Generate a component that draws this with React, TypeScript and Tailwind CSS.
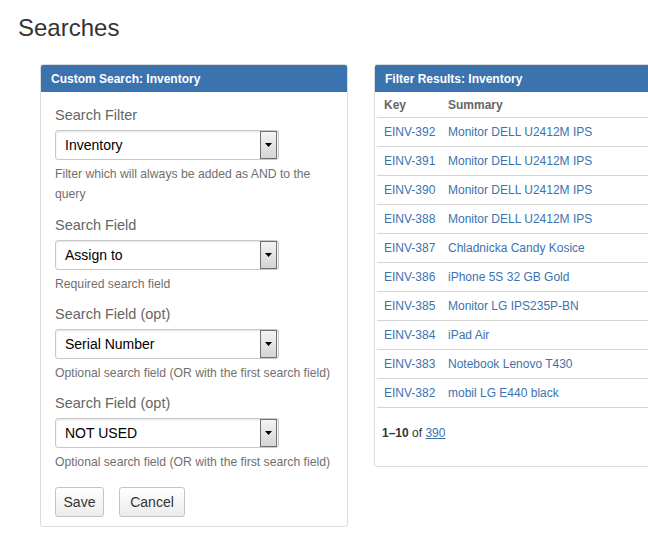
const rows = [
  ["EINV-392", "Monitor DELL U2412M IPS"],
  ["EINV-391", "Monitor DELL U2412M IPS"],
  ["EINV-390", "Monitor DELL U2412M IPS"],
  ["EINV-388", "Monitor DELL U2412M IPS"],
  ["EINV-387", "Chladnicka Candy Kosice"],
  ["EINV-386", "iPhone 5S 32 GB Gold"],
  ["EINV-385", "Monitor LG IPS235P-BN"],
  ["EINV-384", "iPad Air"],
  ["EINV-383", "Notebook Lenovo T430"],
  ["EINV-382", "mobil LG E440 black"],
];

const fields = [
  { label: "Search Filter", value: "Inventory", help: "Filter which will always be added as AND to the query" },
  { label: "Search Field", value: "Assign to", help: "Required search field" },
  { label: "Search Field (opt)", value: "Serial Number", help: "Optional search field (OR with the first search field)" },
  { label: "Search Field (opt)", value: "NOT USED", help: "Optional search field (OR with the first search field)" },
];

function FakeSelect({ value }: { value: string }) {
  return (
    <div className="flex h-[30px] w-[224px] items-center rounded-[3px] border border-[#c8c8c8] bg-white shadow-[inset_0_1px_2px_rgba(0,0,0,0.12)]">
      <span className="flex-1 pl-[9px] text-[14px] text-black">{value}</span>
      <span className="mr-px flex h-[28px] w-[17px] items-center justify-center border border-[#707070] bg-gradient-to-b from-[#f4f4f4] to-[#d4d4d4]">
        <svg width="7" height="4" viewBox="0 0 7 4">
          <path d="M0 0h7L3.5 4z" fill="#000" />
        </svg>
      </span>
    </div>
  );
}

export default function App() {
  return (
    <div className="h-[555px] w-[648px] overflow-hidden bg-white font-['Liberation_Sans',Arial,sans-serif]">
      <h1 className="pl-[18px] pt-[14px] text-[24px] leading-[28px] text-[#333]">Searches</h1>
      <div className="mt-[22px] flex items-start gap-[26px] pl-[40px]">
        <div className="w-[308px] shrink-0 rounded-[3px] border border-[#dcdcdc]">
          <div className="flex h-[27px] items-center rounded-t-[2px] bg-[#3b73af] pl-[10px] text-[12px] font-bold text-white">
            Custom Search: Inventory
          </div>
          <div className="px-[14px] pb-[9px] pt-[13px]">
            {fields.map((f, i) => (
              <div key={i} className={i === 0 ? "mb-[11px]" : "mb-[10px]"}>
                <div className="mb-[5px] text-[14.5px] leading-[20px] text-[#666]">{f.label}</div>
                <FakeSelect value={f.value} />
                <div className="mt-[4px] text-[12.2px] leading-[20px] text-[#707070]">{f.help}</div>
              </div>
            ))}
            <div className="mt-[15px] flex gap-[15px]">
              <button className="h-[30px] w-[49px] rounded-[3px] border border-[#c4c4c4] bg-gradient-to-b from-white to-[#ececec] text-[14px] text-[#333]">
                Save
              </button>
              <button className="h-[30px] w-[66px] rounded-[3px] border border-[#c4c4c4] bg-gradient-to-b from-white to-[#ececec] text-[14px] text-[#333]">
                Cancel
              </button>
            </div>
          </div>
        </div>
        <div className="h-[403px] w-[300px] shrink-0 rounded-[3px] border border-[#dcdcdc]">
          <div className="flex h-[27px] items-center rounded-t-[2px] bg-[#3b73af] pl-[10px] text-[12px] font-bold text-white">
            Filter Results: Inventory
          </div>
          <div className="pl-[2px]">
            <div className="flex h-[26px] items-center border-b border-[#d5d5d5] text-[12px] font-bold text-[#666]">
              <span className="w-[71px] pl-[7px]">Key</span>
              <span>Summary</span>
            </div>
            {rows.map(([k, s]) => (
              <div key={k} className="flex h-[29px] items-center border-b border-[#d5d5d5] text-[12px] text-[#3b73af]">
                <span className="w-[71px] pl-[7px]">{k}</span>
                <span>{s}</span>
              </div>
            ))}
            <div className="pl-[5px] pt-[16px] text-[12px] text-[#333]">
              <b>1–10</b> of <span className="text-[#3b73af] underline">390</span>
            </div>
          </div>
        </div>
      </div>
    </div>
  );
}
